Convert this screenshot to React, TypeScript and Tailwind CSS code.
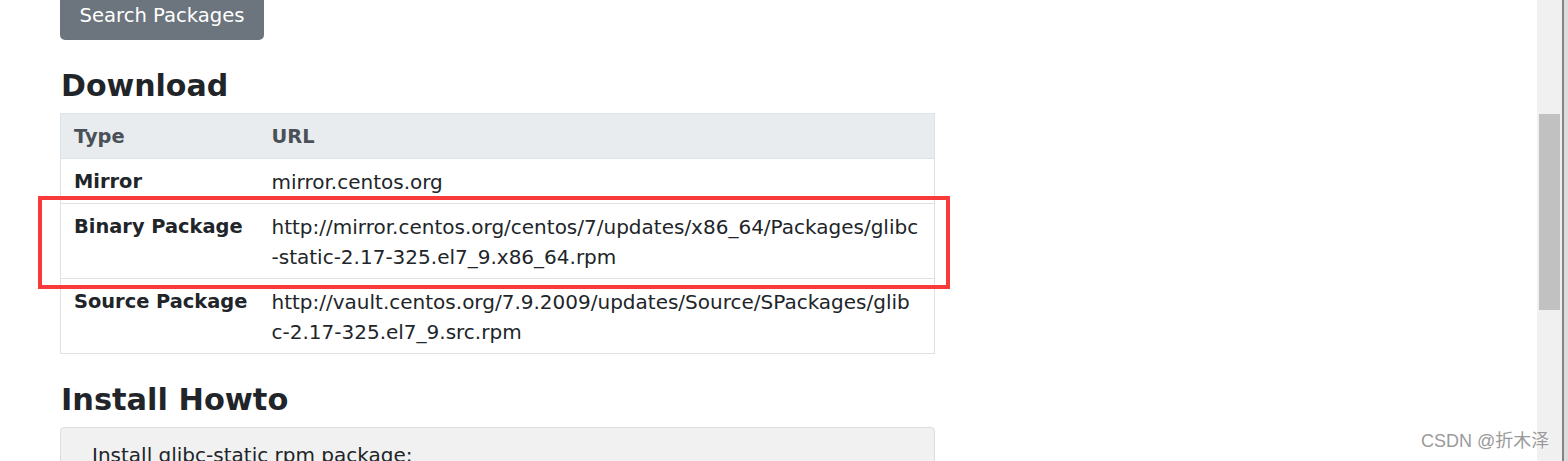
import React from 'react';

const rows = [
  { type: 'Mirror', url: ['mirror.centos.org'] },
  {
    type: 'Binary Package',
    url: ['http://mirror.centos.org/centos/7/updates/x86_64/Packages/glibc', '-static-2.17-325.el7_9.x86_64.rpm'],
  },
  {
    type: 'Source Package',
    url: ['http://vault.centos.org/7.9.2009/updates/Source/SPackages/glib', 'c-2.17-325.el7_9.src.rpm'],
  },
];

export default function App() {
  return (
    <div className="relative flex h-[461px] w-[1568px] overflow-hidden bg-white text-[#212529]" style={{ fontFamily: '"DejaVu Sans", Verdana, sans-serif' }}>
      <div className="flex-1 pl-[60px]">
        <div className="w-[875px]">
          {/* search button, cut off at the top */}
          <div className="flex h-[40px] w-[204px] justify-center rounded-b-[5px] bg-[#6c757d] pt-px text-[19.6px] leading-[30px] text-white">
            Search Packages
          </div>

          <h2 className="mt-[28px] mb-[9px] pl-px text-[30px] font-bold leading-[36px]">Download</h2>

          <table className="w-full border border-[#dee2e6] text-left text-[20px] leading-[30px]">
            <thead>
              <tr className="bg-[#e9ecef] text-[#495057]">
                <th className="w-[198px] pt-[8px] pb-[6px] pl-[13px] text-[19.4px] font-bold">Type</th>
                <th className="pt-[8px] pb-[6px] pl-[13px] text-[19.4px] font-bold">URL</th>
              </tr>
            </thead>
            <tbody>
              {rows.map(r => (
                <tr key={r.type} className="border-t border-[#dee2e6]">
                  <td className="pt-[8px] pb-[6px] pl-[13px] align-top text-[19.4px] font-bold">{r.type}</td>
                  <td className="pt-[8px] pb-[6px] pl-[13px] align-top">
                    {r.url.map(line => (
                      <div key={line} className="whitespace-nowrap">{line}</div>
                    ))}
                  </td>
                </tr>
              ))}
            </tbody>
          </table>

          <h2 className="mt-[28px] mb-[9px] pl-px text-[30.4px] font-bold leading-[36px]">Install Howto</h2>

          <div className="h-[80px] rounded-[4px] border border-[#dddddd] bg-[#f1f1f1] pt-[12px] pl-[31px] text-[20px] leading-[30px]">
            Install glibc-static rpm package:
          </div>
        </div>
      </div>

      {/* red highlight around the binary package row */}
      <div className="absolute top-[196px] left-[38px] h-[93px] w-[912px] border-4 border-[#f83a3a]" />

      {/* scrollbar */}
      <div className="w-[25px] bg-[#f0f0f0] px-[2px] pt-[114px]">
        <div className="h-[196px] w-[21px] bg-[#c1c1c1]" />
      </div>
      <div className="w-[2px] bg-[#838383]" />
      <div className="w-[4px] bg-[#dcdcdc]" />

      <div
        className="absolute top-[428px] left-[1421px] text-[18px] text-[#9a9a9a]"
        style={{ fontFamily: '"Liberation Sans", "Noto Sans CJK SC", sans-serif', textShadow: '1px 1px 0 #fff' }}
      >
        CSDN @折木泽
      </div>
    </div>
  );
}
